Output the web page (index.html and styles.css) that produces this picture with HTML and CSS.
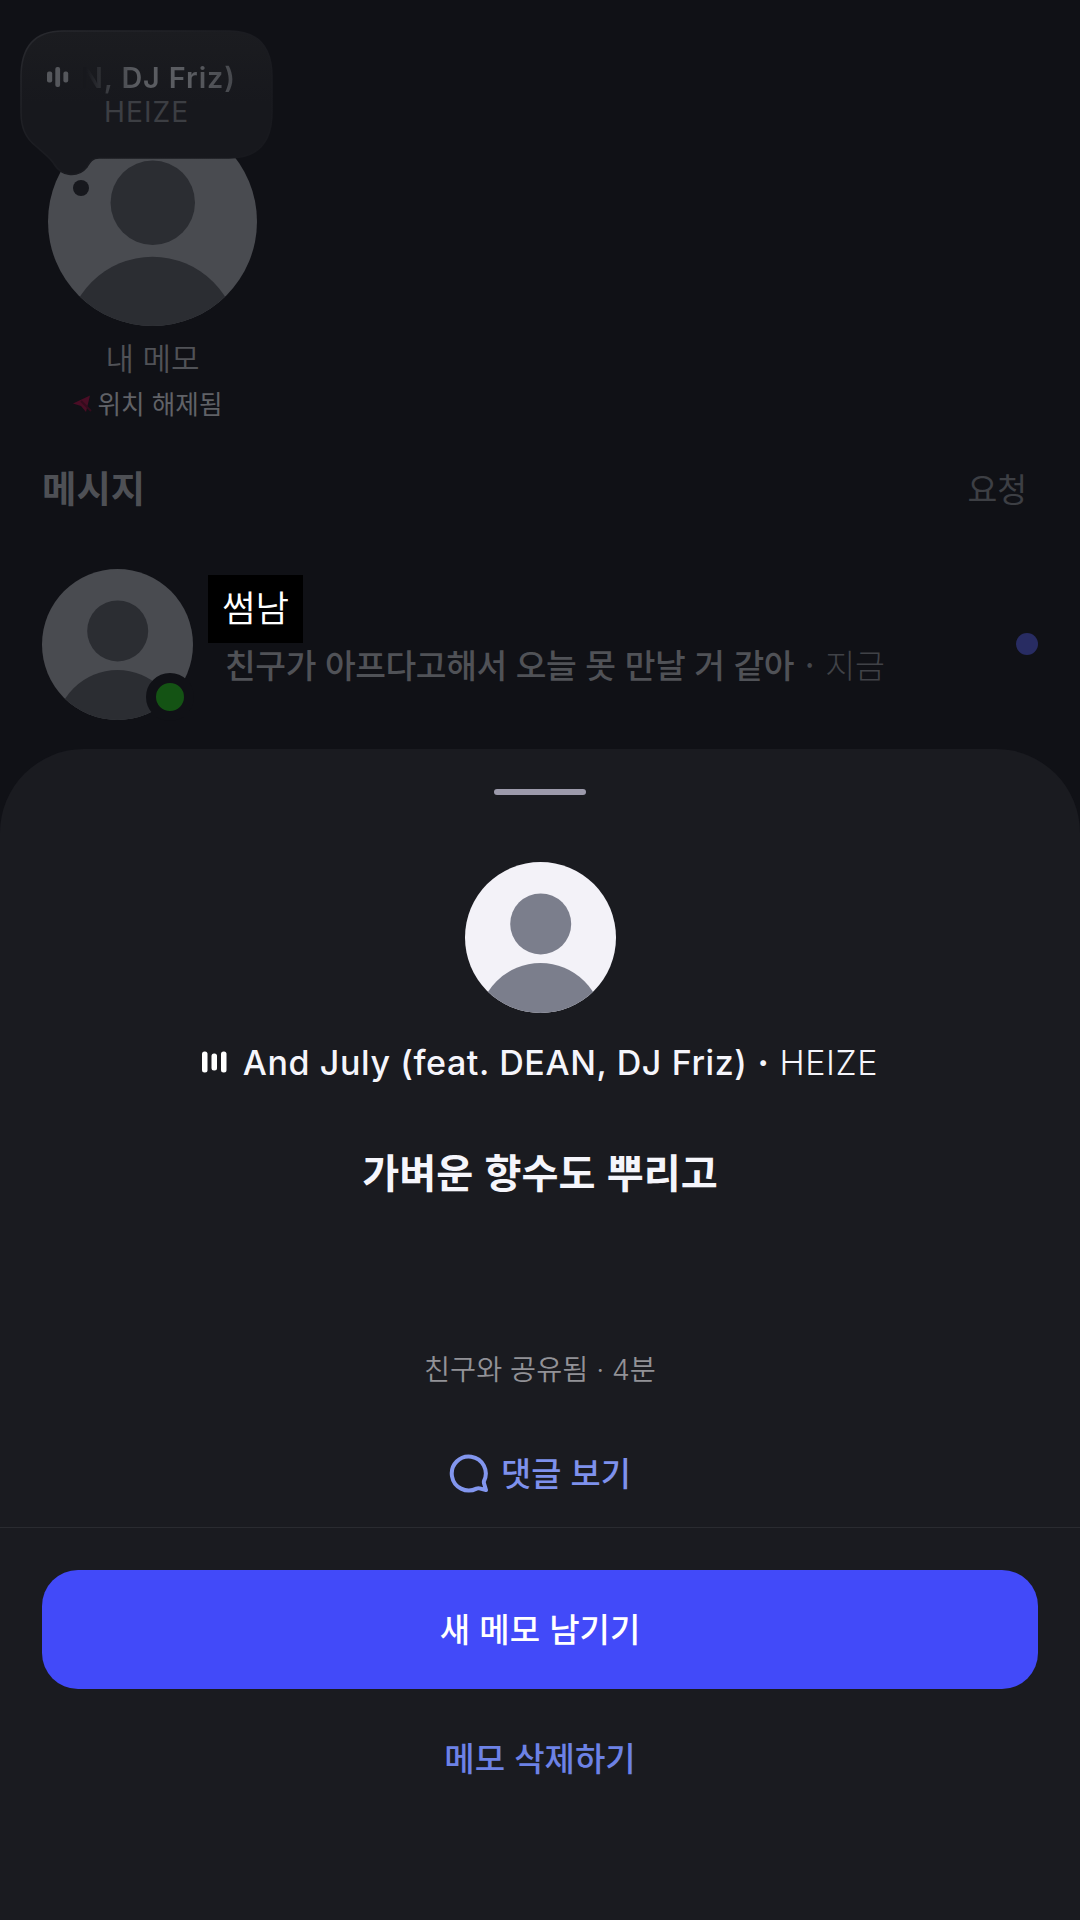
FILE: index.html
```html
<!DOCTYPE html>
<html lang="ko">
<head>
<meta charset="utf-8">
<title>메모</title>
<link rel="stylesheet" href="styles.css">
</head>
<body>
<svg class="defs" aria-hidden="true">
  <symbol id="person" viewBox="0 0 150 150">
    <clipPath id="round"><circle cx="75" cy="75" r="75"/></clipPath>
    <g clip-path="url(#round)">
      <rect class="face" width="150" height="150"/>
      <g class="figure"><circle cx="75.2" cy="61.5" r="30.3"/><circle cx="75" cy="162" r="61.7"/></g>
    </g>
  </symbol>
</svg>
<div class="screen">
  <main class="inbox">
    <section class="note">
      <svg class="avatar avatar-note"><use href="#person"/></svg>
      <div class="note-name">내 메모</div>
      <div class="note-place">
        <svg class="arrow" viewBox="0 0 20 20"><path d="M0 10.500 17 2.500 13 19 8 13z"/><path d="M8 8l10 10" class="slash"/></svg>
        <span>위치 해제됨</span>
      </div>
      <div class="bubble">
        <svg class="bubble-shape" viewBox="0 0 254 168">
          <defs><linearGradient id="edge" x1="0" y1="0" x2="1" y2="1"><stop offset="0" stop-color="#292a2f"/><stop offset=".45" stop-color="#1b1c21"/><stop offset="1" stop-color="#17181d"/></linearGradient>
          <linearGradient id="fill" x1="0" y1="0" x2="0" y2="1"><stop offset="0" stop-color="#1b1c20"/><stop offset=".5" stop-color="#17181d"/></linearGradient></defs>
          <path d="M43 1H209C238 1 252 17 252 47V82C252 112 238 128 209 128H79C72 128 70 132 67 137C58 148 42 147 34 134C30 127 23 123 17 117C5 108 1 97 1 82V47C1 17 15 1 43 1z" fill="url(#fill)" stroke="url(#edge)" stroke-width="1.500"/>
          <circle cx="61" cy="158" r="8" fill="#17181d"/>
        </svg>
        <div class="bubble-song">
          <svg class="bubble-bars" viewBox="0 0 22 20"><rect x="0" y="4.500" width="5.200" height="11" rx="2"/><rect x="8.300" y="0" width="4.800" height="20" rx="2"/><rect x="16.400" y="4.500" width="4.800" height="11" rx="2"/></svg>
          <span class="bubble-title">N, DJ Friz)</span>
        </div>
        <div class="bubble-artist">HEIZE</div>
      </div>
    </section>
    <header class="heading">
      <h1>메시지</h1>
      <span class="requests">요청</span>
    </header>
    <section class="chat">
      <div class="chat-photo">
        <svg class="avatar avatar-chat"><use href="#person"/></svg>
        <i class="online"></i>
      </div>
      <div class="chat-text">
        <div class="chat-name">썸남</div>
        <div class="chat-line"><span class="chat-message">친구가 아프다고해서 오늘 못 만날 거 같아</span><span class="chat-dot">·</span><span class="chat-time">지금</span></div>
      </div>
      <i class="unread"></i>
    </section>
  </main>
  <section class="sheet">
    <div class="handle"></div>
    <svg class="avatar avatar-sheet"><use href="#person"/></svg>
    <div class="song">
      <svg class="song-bars" viewBox="0 0 25 22"><rect x="0" y="0.500" width="5.500" height="21" rx="2.500"/><rect x="9.500" y="2.500" width="5.500" height="17" rx="2.500"/><rect x="19" y="0.500" width="5.500" height="21" rx="2.500"/></svg>
      <span class="song-title">And July (feat. DEAN, DJ Friz)</span>
      <span class="song-dot">·</span>
      <span class="song-artist">HEIZE</span>
    </div>
    <div class="memo">가벼운 향수도 뿌리고</div>
    <div class="shared">친구와 공유됨 <span>·</span> <span>4</span>분</div>
    <div class="comments">
      <svg class="comment-icon" viewBox="0 0 40 40"><path d="M35 27A17 17 0 1 0 27.500 34.600Q29 34 30.500 34.400L37 36 35.200 30Q34.600 28.500 35 27z"/></svg>
      <span>댓글 보기</span>
    </div>
    <footer class="actions">
      <button class="new-note">새 메모 남기기</button>
      <button class="delete-note">메모 삭제하기</button>
    </footer>
  </section>
</div>
</body>
</html>
```
FILE: styles.css
```css
* { box-sizing: border-box; }
body { margin: 0; background: #101116; font-family: "Noto Sans CJK KR", sans-serif; }
.defs { position: absolute; width: 0; height: 0; }
.screen { width: 1080px; height: 1920px; display: flex; flex-direction: column; overflow: hidden; white-space: nowrap; }
.inbox { height: 749px; }

.avatar { display: block; --face: #494b50; --figure: #2b2d32; }
.face { fill: var(--face); }
.figure { fill: var(--figure); }

.note { position: relative; width: 305px; height: 454px; padding-top: 117px; display: flex; flex-direction: column; align-items: center; }
.avatar-note { width: 209px; height: 209px; }
.note-name { margin-top: 9px; height: 44px; line-height: 44px; font-size: 31px; font-weight: 350; color: #505257; }
.note-place { margin: 4px 0 0 -10px; height: 40px; display: flex; align-items: center; gap: 5px; line-height: 40px; font-size: 25.6px; color: #606267; }
.arrow { width: 20px; height: 20px; fill: #4a0d25; }
.slash { stroke: #340b1d; stroke-width: 2; }

.bubble { position: absolute; left: 20px; top: 30px; width: 254px; height: 168px; padding: 27px 0 0 27px; font-family: Inter, sans-serif; }
.bubble-shape { position: absolute; inset: 0; width: 254px; height: 168px; }
.bubble-song { position: relative; display: flex; align-items: center; gap: 12px; height: 40px; }
.bubble-bars { width: 22px; height: 20px; fill: #55575c; }
.bubble-title { font-size: 28.8px; font-weight: 600; letter-spacing: 0.9px; background: linear-gradient(90deg, #17181d 0 5px, #3c3e43 28px, #5a5c61 55px, #5a5c61 110px, #45474c 100%); background-clip: text; color: transparent; }
.bubble-artist { position: relative; height: 30px; margin-left: 57px; line-height: 31px; font-size: 28.2px; letter-spacing: 1px; color: #3c3e43; }

.heading { height: 66px; padding: 0 53px 0 42px; display: flex; align-items: center; justify-content: space-between; }
.heading h1 { margin: 0; font-size: 37.4px; font-weight: 700; color: #4e5055; }
.requests { font-size: 32.4px; color: #3d3f44; }

.chat { height: 229px; padding: 49px 42px 0; display: flex; }
.chat-photo { position: relative; width: 151px; height: 151px; }
.avatar-chat { width: 151px; height: 151px; }
.online { position: absolute; left: 104px; top: 104px; width: 48px; height: 48px; border: 10.5px solid #101116; border-radius: 50%; background: #145314; }
.chat-text { width: 700px; margin-left: 15px; padding-top: 6px; }
.chat-name { width: 95px; height: 68px; background: #000; color: #fff; text-align: center; line-height: 64px; font-size: 36.5px; font-weight: 350; }
.chat-line { display: flex; height: 44px; margin-left: 17px; line-height: 42px; font-size: 33.4px; }
.chat-message { color: #505257; font-weight: 500; letter-spacing: -0.4px; }
.chat-dot { width: 31px; text-align: center; color: #44464b; }
.chat-time { font-size: 32.5px; font-weight: 300; color: #404247; }
.unread { width: 22px; height: 22px; margin: 64px 0 0 auto; border-radius: 50%; background: #282c62; }

.sheet { flex: 1; display: flex; flex-direction: column; align-items: center; padding-top: 40px; background: #1a1b20; border-radius: 84px 84px 0 0; }
.handle { width: 92px; height: 6px; border-radius: 3px; background: #9c9aab; }
.avatar-sheet { width: 151px; height: 151px; margin-top: 67px; --face: #f3f2f8; --figure: #7b7e8c; }
.song { display: flex; align-items: center; height: 50px; margin-top: 24px; font-family: Inter, sans-serif; font-size: 34px; letter-spacing: 0.6px; color: #f5f5fb; }
.song-bars { width: 25px; height: 22px; margin-right: 16px; fill: #fff; }
.song-title { font-weight: 540; }
.song-dot { width: 32px; text-align: center; font-weight: 700; }
.song-artist { font-weight: 300; }
.memo { height: 60px; margin-top: 54px; line-height: 60px; font-size: 40.2px; font-weight: 700; color: #f5f5fb; }
.shared { height: 40px; margin-top: 147px; line-height: 40px; font-size: 28.3px; font-weight: 350; color: #929297; }
.shared span { font-family: Inter, sans-serif; }
.comments { display: flex; align-items: center; height: 50px; margin-top: 58px; gap: 12px; font-size: 32.8px; font-weight: 500; color: #7e91ec; }
.comment-icon { width: 40px; height: 40px; margin-top: 6px; fill: none; stroke: #8296ee; stroke-width: 4; stroke-linejoin: round; }
.actions { width: 100%; margin-top: 31px; padding: 42px 42px 0; border-top: 1px solid #2a2b30; display: flex; flex-direction: column; align-items: center; }
.actions button { border: 0; padding: 0; font-family: inherit; font-weight: 500; font-size: 33px; }
.actions .new-note { width: 996px; height: 119px; padding-bottom: 3px; border-radius: 36px; background: #424af9; color: #fff; }
.delete-note { height: 60px; margin-top: 38px; background: none; color: #6d82e6; }
```
